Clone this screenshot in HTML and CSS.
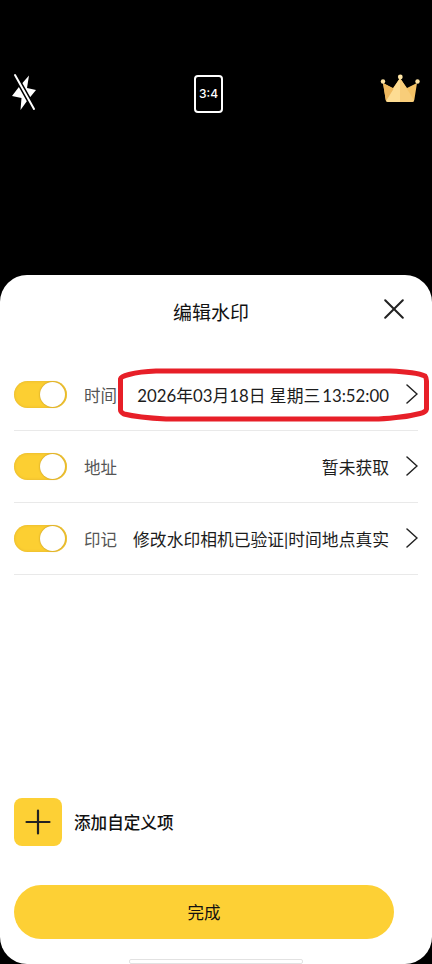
FILE: index.html
```html
<!DOCTYPE html>
<html lang="zh-CN">
<head>
<meta charset="utf-8">
<title>编辑水印</title>
<link rel="stylesheet" href="styles.css">
</head>
<body>
<div class="screen">
  <header class="camera-bar">
    <svg class="flash" width="28" height="40" viewBox="0 0 28 40">
      <path d="M19 4.500L8.500 16.500 2 25l9.500 2L10.500 39 17 30l9-11-9-2z" fill="#fff"/>
      <path d="M5 4l19 34" stroke="#000" stroke-width="5"/>
      <path d="M5 4l19 34" stroke="#fff" stroke-width="2"/>
    </svg>
    <div class="ratio">3:4</div>
    <svg class="crown" width="40" height="30" viewBox="0 0 40 30">
      <path d="M3 9l10 5 7-10 7 10 10-5-2.700 17q-.3 2-2.300 2H8q-2 0-2.300-2z" fill="#f5c366"/>
      <path d="M20 4L6 26q0 2 2 2h12z" fill="#fddc93"/>
      <path d="M20 4l14 22q0 2-2 2H20z" fill="#f8cd79"/>
      <path d="M3 9l10.500 6L6 27z" fill="#efb85d"/>
      <circle cx="3" cy="7.500" r="2.200" fill="#ffe5a5"/>
      <circle cx="20.300" cy="3" r="2.400" fill="#ffe5a5"/>
      <circle cx="37.500" cy="7.500" r="2.200" fill="#ffe5a5"/>
    </svg>
  </header>
  <main class="sheet">
    <div class="title-bar">
      <h1>编辑水印</h1>
      <svg class="close" width="20" height="20" viewBox="0 0 20 20"><path d="M1.200 1.200l17.600 17.600M18.800 1.200L1.200 18.800"/></svg>
    </div>
    <section class="rows">
      <div class="row">
        <span class="switch"></span><span class="label">时间</span>
        <span class="value date">2026年03月18日 星期三<span class="time">13:52:00</span></span>
        <svg class="chevron" width="12" height="20" viewBox="0 0 12 20"><path d="M1 1l10 9-10 9"/></svg>
        <svg class="marker" width="312" height="56" viewBox="0 0 312 56"><path d="M2.500 12Q3 9.500 11 7.500 22 4.500 38 4H272Q298 5 307 9 308.500 11 308.500 14V42Q308 45 302 46.500 291 49.500 278 50.500 265 52 256 52H48Q20 50.500 6 47Q2.500 45 2.500 43Z"/></svg>
      </div>
      <div class="row">
        <span class="switch"></span><span class="label">地址</span>
        <span class="value">暂未获取</span>
        <svg class="chevron" width="12" height="20" viewBox="0 0 12 20"><path d="M1 1l10 9-10 9"/></svg>
      </div>
      <div class="row">
        <span class="switch"></span><span class="label">印记</span>
        <span class="value">修改水印相机已验证|时间地点真实</span>
        <svg class="chevron" width="12" height="20" viewBox="0 0 12 20"><path d="M1 1l10 9-10 9"/></svg>
      </div>
    </section>
    <div class="add">
      <span class="add-icon"><svg width="26" height="26" viewBox="0 0 26 26"><path d="M13 1.500v23M1.500 13h23"/></svg></span>
      <span>添加自定义项</span>
    </div>
    <button class="done">完成</button>
    <div class="home"></div>
  </main>
</div>
</body>
</html>
```
FILE: styles.css
```css
* { box-sizing: border-box; }
body {
  margin: 0;
  background: #000;
  font-family: Lato, "Noto Sans CJK SC", sans-serif;
  color: #111;
}
.screen {
  width: 432px;
  height: 964px;
  display: flex;
  flex-direction: column;
  overflow: hidden;
}
.camera-bar {
  height: 275px;
  padding: 72px 12px 0 10px;
  display: flex;
  align-items: flex-start;
}
.flash { margin-top: -1px; }
.ratio {
  width: 29px;
  height: 38px;
  margin: 3px 0 0 156px;
  border: 2px solid #fff;
  border-radius: 4px;
  color: #fff;
  font: 500 12px/34px Inter, sans-serif;
  text-align: center;
}
.crown { margin: 2px 0 0 auto; }
.sheet {
  height: 689px;
  padding: 0 14px;
  background: #fff;
  border-radius: 27px;
  display: flex;
  flex-direction: column;
}
.title-bar {
  height: 83px;
  display: grid;
  grid-template-columns: 1fr 76px 1fr;
}
h1 {
  grid-column: 2;
  margin: 24px 0 0 -5px;
  font-size: 19px;
  line-height: 28px;
  font-weight: 400;
  white-space: nowrap;
}
.close { justify-self: end; margin: 24px 14px 0 0; }
svg path { stroke-linecap: round; }
.close path, .chevron path, .add-icon path, .marker path { fill: none; stroke: #222; }
.close path { stroke-width: 2; }
.rows { padding-top: 1px; margin-bottom: -1px; }
.row {
  position: relative;
  height: 72px;
  border-bottom: 1px solid #e9e9e9;
  display: flex;
  align-items: center;
}
.switch {
  width: 53px;
  height: 27px;
  padding: 1px 2px;
  border-radius: 14px;
  background: #fccf32;
  box-shadow: inset 0 0 3px #dfb12e;
  display: flex;
  justify-content: flex-end;
}
.switch::after {
  content: "";
  width: 25px;
  height: 25px;
  border-radius: 50%;
  background: #fff;
  box-shadow: 0 0 2px #b58b20;
}
.label { margin-left: 17px; font-size: 16.5px; color: #555; }
.value { margin-left: auto; font-size: 16.8px; color: #1c1c1c; white-space: nowrap; }
.time { margin-left: 2px; }
.chevron { margin: 0 0 1px 17px; }
.chevron path { stroke-width: 1.5; }
.marker { position: absolute; left: 104px; top: 8px; }
.marker path { stroke: #e71f28; stroke-width: 5; }
.add {
  margin-top: 224px;
  height: 48px;
  display: flex;
  align-items: center;
  gap: 12px;
  font-size: 16.6px;
  font-weight: 500;
}
.add-icon {
  width: 48px;
  height: 48px;
  border-radius: 8px;
  background: #fdd035;
  display: grid;
  place-items: center;
}
.add-icon path { stroke-width: 2.2; }
.done {
  width: 380px;
  height: 54px;
  margin-top: 39px;
  padding: 2px 0 0;
  border: 0;
  border-radius: 27px;
  background: #fdd035;
  color: #111;
  font: 400 16.5px/52px Lato, "Noto Sans CJK SC", sans-serif;
}
.home {
  width: 174px;
  height: 5px;
  margin: 20px 0 0 115px;
  border: 1px solid #e2e2e2;
  border-radius: 2px;
}
```
